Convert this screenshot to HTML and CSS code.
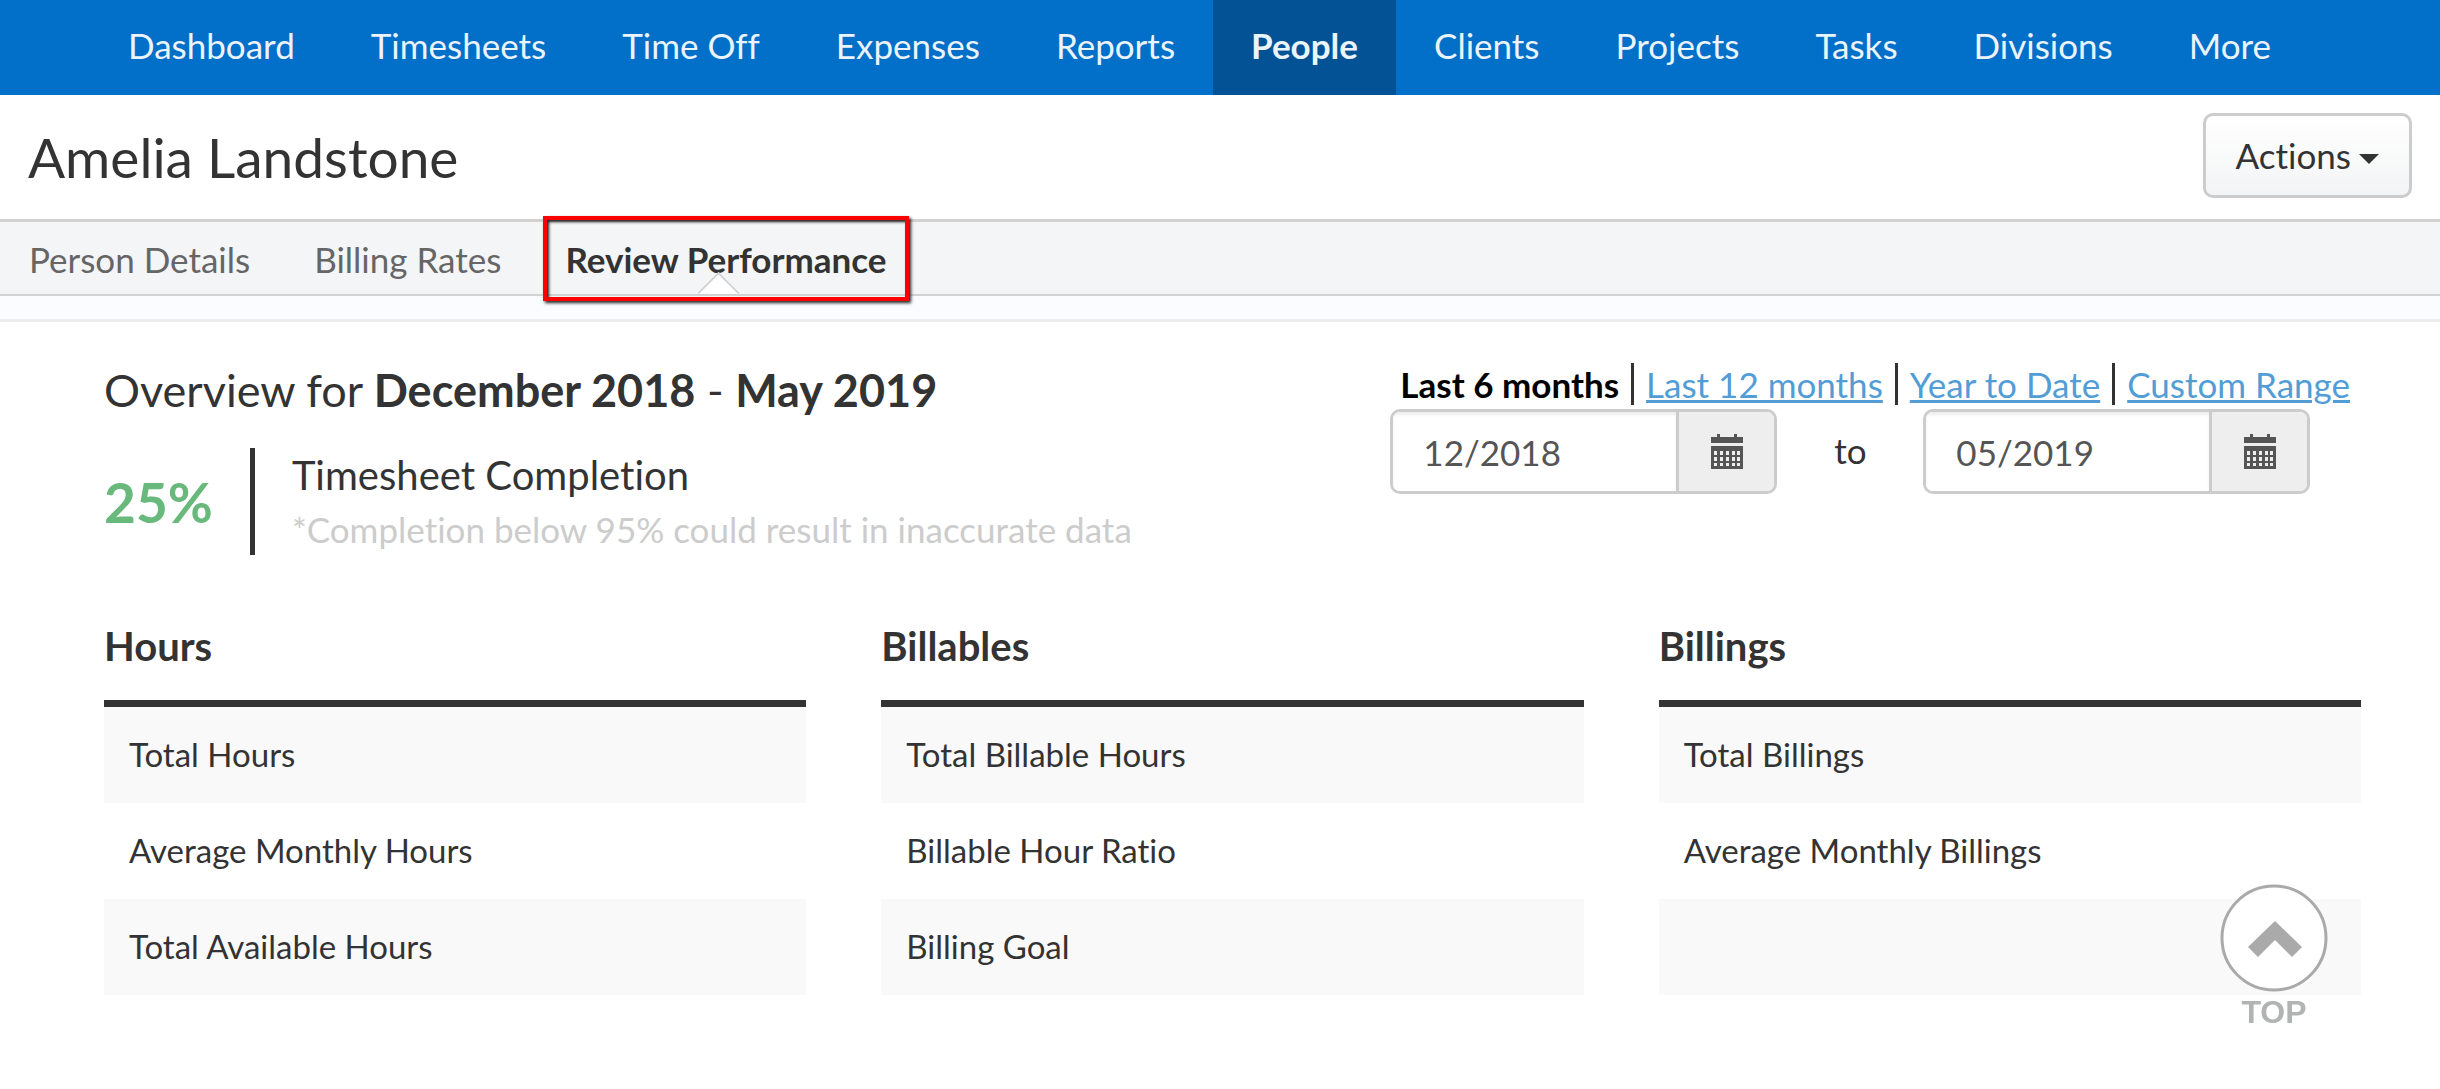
FILE: index.html
```html
<!DOCTYPE html>
<html lang="en">
<head>
    <meta charset="UTF-8">
    <meta name="viewport" content="width=device-width, initial-scale=1.0">
    <title>Amelia Landstone - Review Performance</title>
    <link rel="stylesheet" href="styles.css">
</head>
<body>
    <nav class="main-nav">
        <a href="#">Dashboard</a>
        <a href="#">Timesheets</a>
        <a href="#">Time Off</a>
        <a href="#">Expenses</a>
        <a href="#">Reports</a>
        <a href="#" class="active">People</a>
        <a href="#">Clients</a>
        <a href="#">Projects</a>
        <a href="#">Tasks</a>
        <a href="#">Divisions</a>
        <a href="#">More</a>
    </nav>

    <header class="page-header">
        <h1>Amelia Landstone</h1>
        <button type="button" class="actions">Actions <span class="caret"></span></button>
    </header>

    <nav class="tabs">
        <a href="#">Person Details</a>
        <a href="#">Billing Rates</a>
        <a href="#" class="active">Review Performance</a>
    </nav>
    <div class="strip"></div>

    <main>
        <div class="overview">
            <div class="summary">
                <h2>Overview for <b>December 2018</b> - <b>May 2019</b></h2>
                <div class="completion">
                    <div class="percent">25%</div>
                    <div class="completion-text">
                        <p class="label">Timesheet Completion</p>
                        <p class="note">*Completion below 95% could result in inaccurate data</p>
                    </div>
                </div>
            </div>

            <form class="filter">
                <div class="ranges">
                    <strong>Last 6 months</strong>
                    <a href="#">Last 12 months</a>
                    <a href="#">Year to Date</a>
                    <a href="#">Custom Range</a>
                </div>
                <div class="dates">
                    <div class="date-group">
                        <input type="text" value="12/2018" aria-label="Start month">
                        <button type="button" aria-label="Pick start month">
                            <svg class="calendar" viewBox="0 0 32 35"><path fill-rule="evenodd" d="M6 0h3v3h14V0h3v3h6v6H0V3h6zM0 12h32v23H0zM3 17v4h3v-4zM9 17v4h3v-4zM15 17v4h3v-4zM21 17v4h3v-4zM26 17v4h3v-4zM3 23v4h3v-4zM9 23v4h3v-4zM15 23v4h3v-4zM21 23v4h3v-4zM26 23v4h3v-4zM3 29v3h3v-3zM9 29v3h3v-3zM15 29v3h3v-3zM21 29v3h3v-3zM26 29v3h3v-3z"/></svg>
                        </button>
                    </div>
                    <span class="to">to</span>
                    <div class="date-group">
                        <input type="text" value="05/2019" aria-label="End month">
                        <button type="button" aria-label="Pick end month">
                            <svg class="calendar" viewBox="0 0 32 35"><path fill-rule="evenodd" d="M6 0h3v3h14V0h3v3h6v6H0V3h6zM0 12h32v23H0zM3 17v4h3v-4zM9 17v4h3v-4zM15 17v4h3v-4zM21 17v4h3v-4zM26 17v4h3v-4zM3 23v4h3v-4zM9 23v4h3v-4zM15 23v4h3v-4zM21 23v4h3v-4zM26 23v4h3v-4zM3 29v3h3v-3zM9 29v3h3v-3zM15 29v3h3v-3zM21 29v3h3v-3zM26 29v3h3v-3z"/></svg>
                        </button>
                    </div>
                </div>
            </form>
        </div>

        <div class="stats">
            <section>
                <h3>Hours</h3>
                <table>
                    <tr><td>Total Hours</td></tr>
                    <tr><td>Average Monthly Hours</td></tr>
                    <tr><td>Total Available Hours</td></tr>
                </table>
            </section>
            <section>
                <h3>Billables</h3>
                <table>
                    <tr><td>Total Billable Hours</td></tr>
                    <tr><td>Billable Hour Ratio</td></tr>
                    <tr><td>Billing Goal</td></tr>
                </table>
            </section>
            <section>
                <h3>Billings</h3>
                <table>
                    <tr><td>Total Billings</td></tr>
                    <tr><td>Average Monthly Billings</td></tr>
                    <tr><td></td></tr>
                </table>
            </section>
        </div>
    </main>

    <a href="#" class="back-to-top">
        <svg viewBox="0 0 108 108">
            <circle cx="54" cy="54" r="52" fill="#fff" fill-opacity="0.9" stroke="#aaa" stroke-width="3"/>
            <path d="M55 37L82 63L72 73L55 56L38 73L28 63Z" fill="#aaa"/>
        </svg>
        <span>TOP</span>
    </a>
</body>
</html>
```

FILE: styles.css
```css
* {
    box-sizing: border-box;
}

body {
    margin: 0;
    font-family: Lato, sans-serif;
    font-size: 35px;
    line-height: 42px;
    font-variant-ligatures: none;
    color: #333;
    background: #fff;
}

h1, h2, h3, p {
    margin: 0;
    font-weight: normal;
}

a {
    text-decoration: none;
}

button, input {
    font: inherit;
    font-variant-ligatures: none;
    color: inherit;
}

/* Top navigation */
.main-nav {
    display: flex;
    padding-left: 90px;
    background: #026fc9;
}

.main-nav a {
    padding: 24px 38px 29px;
    color: #ebf3fb;
}

.main-nav .active {
    background: #025295;
    font-weight: bold;
}

/* Person name and actions */
.page-header {
    display: flex;
    align-items: center;
    justify-content: space-between;
    padding: 18px 28px 21px;
}

.page-header h1 {
    padding-top: 2px;
    font-size: 55px;
    line-height: 66px;
}

.actions {
    display: flex;
    align-items: center;
    gap: 8px;
    height: 85px;
    padding: 0 30px 2px;
    border: 3px solid #ccc;
    border-radius: 10px;
    background: linear-gradient(#fff, #f3f4f5);
}

.caret {
    margin-top: 8px;
    border: 10px solid transparent;
    border-top-color: #333;
    border-bottom: 0;
}

/* Tabs */
.tabs {
    display: flex;
    gap: 64px;
    padding: 0 29px;
    border-top: 3px solid #d2d2d2;
    border-bottom: 2px solid #d2d2d2;
    background: #f4f5f7;
}

.tabs a {
    position: relative;
    padding: 16px 0 14px;
    color: #666;
}

.tabs .active {
    color: #333;
    font-weight: bold;
}

.tabs .active::before {
    content: "";
    position: absolute;
    bottom: -15px;
    left: calc(50% - 23px);
    width: 27px;
    height: 27px;
    border: 2px solid #d2d2d2;
    background: #fff;
    transform: rotate(45deg);
    clip-path: polygon(0 0, 100% 0, 0 100%);
}

.tabs .active::after {
    content: "";
    position: absolute;
    inset: -6px -22px -7px -22px;
    border: 4px solid #f00;
    box-shadow: 2px 2px 3px #222, inset 2px 2px 3px #222;
}

.strip {
    height: 26px;
    border-bottom: 3px solid #ebedee;
    background: #fafcff;
}

/* Overview */
main {
    padding: 41px 79px 94px 104px;
}

.overview {
    display: flex;
    justify-content: space-between;
}

.summary h2 {
    font-size: 45px;
    line-height: 54px;
}

.completion {
    display: flex;
    align-items: center;
    margin-top: 31px;
}

.percent {
    padding-right: 37px;
    font-size: 55px;
    line-height: 66px;
    font-weight: bold;
    color: #69b87c;
}

.completion-text {
    padding-left: 37px;
    border-left: 5px solid #333;
}

.label {
    font-size: 40px;
    line-height: 55px;
}

.note {
    line-height: 52px;
    color: #ccc;
}

/* Date filter */
.ranges {
    display: flex;
    padding: 0 11px 0 10px;
}

.ranges > * + * {
    margin-left: 12px;
    padding-left: 12px;
    border-left: 3px solid #333;
}

.ranges strong {
    color: #000;
}

.ranges a {
    color: #529dd6;
    text-decoration: underline;
    text-decoration-thickness: 3px;
}

.dates {
    display: flex;
    align-items: center;
    margin-top: 4px;
}

.to {
    width: 146px;
    padding-bottom: 3px;
    text-align: center;
}

.date-group {
    display: flex;
    width: 387px;
    height: 85px;
    border: 3px solid #ccc;
    border-radius: 10px;
    overflow: hidden;
}

.date-group input {
    flex: 1;
    min-width: 0;
    padding: 0 30px;
    border: 0;
    color: #555;
    background: #fff;
    box-shadow: inset 0 3px 3px #eee;
}

.date-group button {
    display: flex;
    align-items: center;
    justify-content: center;
    width: 98px;
    padding: 0;
    border: 0;
    border-left: 3px solid #ccc;
    background: #eee;
}

.calendar {
    width: 32px;
    height: 35px;
    fill: #555;
}

/* Stat tables */
.stats {
    display: grid;
    grid-template-columns: repeat(3, 1fr);
    gap: 75px;
    margin-top: 67px;
}

.stats h3 {
    margin-bottom: 30px;
    font-size: 40px;
    line-height: 48px;
    font-weight: bold;
}

.stats table {
    width: 100%;
    border-top: 7px solid #333;
    border-spacing: 0;
    font-size: 33px;
}

.stats td {
    height: 96px;
    padding: 0 25px 2px;
}

.stats tr:nth-child(odd) {
    background: #f9f9f9;
}

/* Floating link in the corner */
.back-to-top {
    position: fixed;
    right: 112px;
    bottom: 57px;
    display: flex;
    flex-direction: column;
    align-items: center;
    font-family: "Liberation Sans", sans-serif;
    font-size: 32px;
    line-height: 40px;
    font-weight: bold;
    color: #b2b4b4;
}

.back-to-top svg {
    width: 108px;
    height: 108px;
}
```
